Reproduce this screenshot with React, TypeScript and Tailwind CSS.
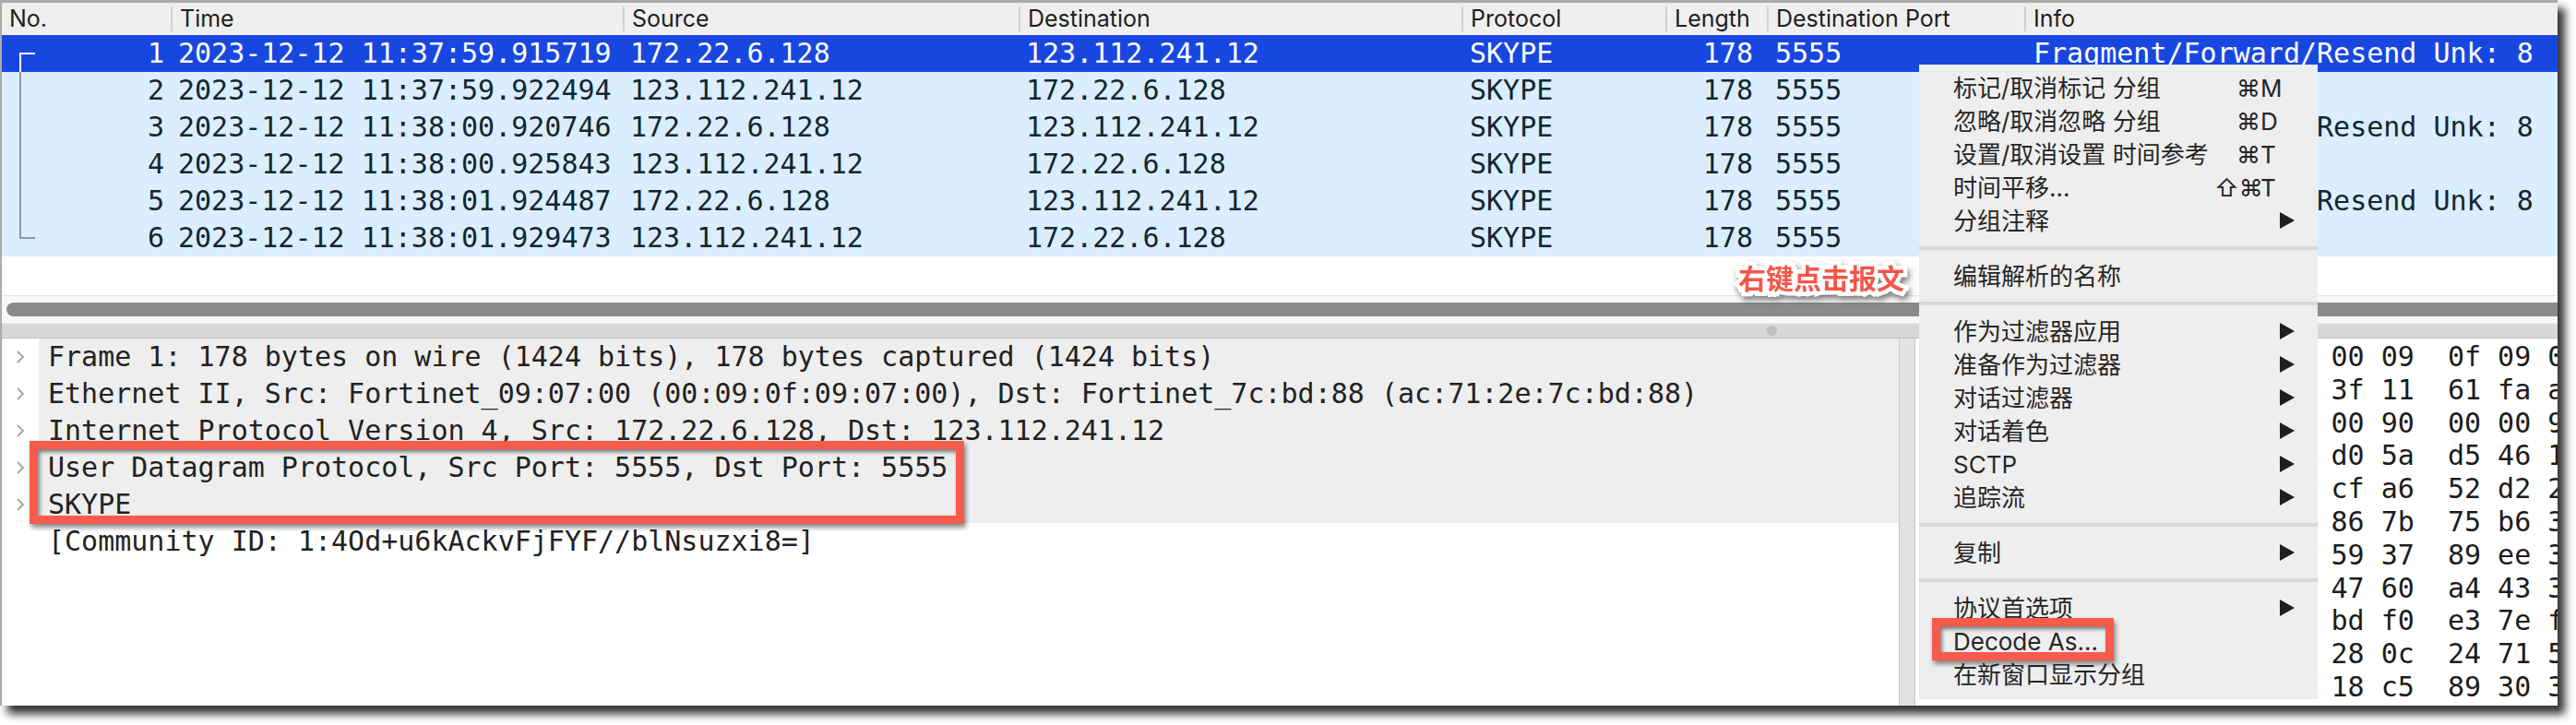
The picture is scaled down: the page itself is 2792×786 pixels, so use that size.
import React from 'react';

const MONO = "font-['DejaVu_Sans_Mono',monospace]";
const SANS = "font-['Inter','DejaVu_Sans','Noto_Sans_CJK_SC',sans-serif]";

type Row = string[];
const rows: Row[] = [
  ['1', '2023-12-12 11:37:59.915719', '172.22.6.128', '123.112.241.12', 'SKYPE', '178', '5555', 'Fragment/Forward/Resend Unk: 8'],
  ['2', '2023-12-12 11:37:59.922494', '123.112.241.12', '172.22.6.128', 'SKYPE', '178', '5555', 'Payload Unk: 8'],
  ['3', '2023-12-12 11:38:00.920746', '172.22.6.128', '123.112.241.12', 'SKYPE', '178', '5555', 'Fragment/Forward/Resend Unk: 8'],
  ['4', '2023-12-12 11:38:00.925843', '123.112.241.12', '172.22.6.128', 'SKYPE', '178', '5555', 'Payload Unk: 8'],
  ['5', '2023-12-12 11:38:01.924487', '172.22.6.128', '123.112.241.12', 'SKYPE', '178', '5555', 'Fragment/Forward/Resend Unk: 8'],
  ['6', '2023-12-12 11:38:01.929473', '123.112.241.12', '172.22.6.128', 'SKYPE', '178', '5555', 'Payload Unk: 8'],
];

const details = [
  { t: 'Frame 1: 178 bytes on wire (1424 bits), 178 bytes captured (1424 bits)', c: true },
  { t: 'Ethernet II, Src: Fortinet_09:07:00 (00:09:0f:09:07:00), Dst: Fortinet_7c:bd:88 (ac:71:2e:7c:bd:88)', c: true },
  { t: 'Internet Protocol Version 4, Src: 172.22.6.128, Dst: 123.112.241.12', c: true },
  { t: 'User Datagram Protocol, Src Port: 5555, Dst Port: 5555', c: true },
  { t: 'SKYPE', c: true },
  { t: '[Community ID: 1:4Od+u6kAckvFjFYF//blNsuzxi8=]', c: false },
];

const hex = [
  '0000  ac 71 2e 7c bd 88 00 09  0f 09 07 00 08 00 45 00',
  '0010  00 a4 5c 1e 00 00 3f 11  61 fa ac 16 06 80 7b 70',
  '0020  f1 0c 15 b3 15 b3 00 90  00 00 9c 3e 02 d8 4e 71',
  '0030  4b 96 e2 0f a3 71 d0 5a  d5 46 1c 8e 72 05 b9 33',
  '0040  e8 17 60 c2 9d 4a cf a6  52 d2 2f 0b 6e 91 c4 78',
  '0050  35 f2 a9 08 7d 1e 86 7b  75 b6 3a 54 e0 c7 12 9f',
  '0060  b1 6d 04 f8 2c 93 59 37  89 ee 3d 06 a8 57 f1 24',
  '0070  9a 40 cb 13 76 e5 47 60  a4 43 3e 81 5c 2a d9 07',
  '0080  62 0d f4 b8 1f 4c bd f0  e3 7e f5 9b 30 6a c2 11',
  '0090  d7 28 83 5e 04 b1 28 0c  24 71 58 e3 a6 19 7c 4f',
  '00a0  0e 95 36 ca 6f 22 18 c5  89 30 3b d4 62 f0 8d 45',
];

type MenuItem = { t: string; mod?: string; k?: string; sub?: boolean } | 'sep';
const menu: MenuItem[] = [
  { t: '标记/取消标记 分组', mod: '⌘', k: 'M' },
  { t: '忽略/取消忽略 分组', mod: '⌘', k: 'D' },
  { t: '设置/取消设置 时间参考', mod: '⌘', k: 'T' },
  { t: '时间平移…', mod: '⇧⌘', k: 'T' },
  { t: '分组注释', sub: true },
  'sep',
  { t: '编辑解析的名称' },
  'sep',
  { t: '作为过滤器应用', sub: true },
  { t: '准备作为过滤器', sub: true },
  { t: '对话过滤器', sub: true },
  { t: '对话着色', sub: true },
  { t: 'SCTP', sub: true },
  { t: '追踪流', sub: true },
  'sep',
  { t: '复制', sub: true },
  'sep',
  { t: '协议首选项', sub: true },
  { t: 'Decode As…' },
  { t: '在新窗口显示分组' },
];

function Bracket({ i }: { i: number }) {
  const white = i === 0;
  const d = i === 0 ? 'M36 20 H20 V40' : i === 5 ? 'M20 0 V20 H36' : 'M20 0 V40';
  return (
    <svg width="40" height="40" viewBox="0 0 40 40" className="shrink-0">
      <path d={d} fill="none" stroke={white ? '#ffffff' : '#8a9ba1'} strokeWidth="2" />
    </svg>
  );
}

function Sep() {
  return <div className="w-[2px] my-[4px] bg-[#d0d0d0] shrink-0" />;
}

export default function App() {
  return (
    <div className="relative w-[2792px] h-[786px] bg-white overflow-hidden">
      <div className="flex flex-col w-[2772px] h-[765px] border-t-[3px] border-l-2 border-[#ababab] bg-white shadow-[8px_9px_9px_rgba(0,0,0,0.8)]">
        {/* header */}
        <div className={`flex h-[35px] shrink-0 bg-[#efefef] text-[25px] text-[#1e1e1e] ${SANS}`}>
          <div className="w-[183px] flex items-center pl-[8px]">No.</div>
          <Sep />
          <div className="w-[488px] flex items-center pl-[8px]">Time</div>
          <Sep />
          <div className="w-[427px] flex items-center pl-[8px]">Source</div>
          <Sep />
          <div className="w-[478px] flex items-center pl-[8px]">Destination</div>
          <Sep />
          <div className="w-[219px] flex items-center pl-[8px]">Protocol</div>
          <Sep />
          <div className="w-[108px] flex items-center pl-[8px]">Length</div>
          <Sep />
          <div className="w-[277px] flex items-center pl-[8px] whitespace-nowrap">Destination Port</div>
          <Sep />
          <div className="flex-1 flex items-center pl-[8px]">Info</div>
        </div>

        {/* packet rows */}
        <div className={`flex flex-col shrink-0 text-[30px] leading-[40px] ${MONO}`}>
          {rows.map((r, i) => (
            <div
              key={i}
              className={`flex h-[40px] whitespace-pre ${i === 0 ? 'bg-[#1847e0] text-white' : 'bg-[#daeeff] text-[#12272e]'}`}
            >
              <div className="w-[183px] flex items-center">
                <Bracket i={i} />
                <span className="flex-1 text-right pr-[7px]">{r[0]}</span>
              </div>
              <div className="w-[490px] pl-[8px] overflow-hidden">{r[1]}</div>
              <div className="w-[429px] pl-[8px] overflow-hidden">{r[2]}</div>
              <div className="w-[480px] pl-[8px] overflow-hidden">{r[3]}</div>
              <div className="w-[221px] pl-[9px] overflow-hidden">{r[4]}</div>
              <div className="w-[110px] pr-[15px] text-right overflow-hidden">{r[5]}</div>
              <div className="w-[279px] pl-[9px] overflow-hidden">{r[6]}</div>
              <div className="flex-1 pl-[10px] overflow-hidden">{r[7]}</div>
            </div>
          ))}
        </div>

        {/* empty list area */}
        <div className="h-[42px] shrink-0 bg-white" />

        {/* horizontal scrollbar */}
        <div className="h-[30px] shrink-0 flex flex-col border-t border-[#e4e4e4] bg-[#f8f8f8]">
          <div className="mt-[7px] ml-[5px] h-[15px] rounded-l-full bg-[#8a8a8a]" />
        </div>

        {/* splitter */}
        <div className="h-[17px] shrink-0 flex items-center bg-[#d8d8d8] border-t border-[#ededed] border-b border-b-[#bdbdbd]">
          <div className="ml-[1913px] w-[11px] h-[11px] rounded-full bg-[#bfbfbf]" />
        </div>

        {/* bottom panes */}
        <div className="flex-1 flex min-h-0">
          {/* details */}
          <div className={`w-[2056px] shrink-0 bg-white flex flex-col text-[30px] leading-[40px] text-[#222222] whitespace-pre ${MONO}`}>
            {details.map((d, i) => (
              <div key={i} className="flex h-[40px]">
                <div className="w-[40px] shrink-0 flex items-center justify-center bg-white">
                  {d.c && (
                    <svg width="12" height="16" viewBox="0 0 12 16">
                      <path d="M3 2 L9 8 L3 14" fill="none" stroke="#a3a3a3" strokeWidth="1.8" />
                    </svg>
                  )}
                </div>
                <div className={`flex-1 pl-[10px] overflow-hidden ${d.c ? 'bg-[#eeeeee]' : 'bg-white'}`}>{d.t}</div>
              </div>
            ))}
          </div>

          {/* vertical splitter */}
          <div className="w-[18px] shrink-0 bg-[#e2e2e2] border-l border-r border-[#c8c8c8]" />

          {/* hex */}
          <div className={`flex-1 bg-white pl-[17px] pt-[2px] overflow-hidden whitespace-pre text-[30px] leading-[35.8px] text-[#1c1c1c] ${MONO}`}>
            {hex.map((h, i) => (
              <div key={i}>{h}</div>
            ))}
          </div>
        </div>
      </div>

      {/* context menu */}
      <div className={`absolute left-[2080px] top-[70px] w-[432px] h-[688px] bg-[#eeeeee] pt-[7px] text-[26px] text-[#262626] ${SANS}`}>
        {menu.map((m, i) =>
          m === 'sep' ? (
            <div key={i} className="my-[10px] h-[4px] bg-[#d8d8d8]" />
          ) : (
            <div key={i} className="h-[36px] flex items-center pl-[37px] pr-[25px] whitespace-nowrap">
              <span className="flex-1">{m.t}</span>
              <div className="w-[87px] flex items-center justify-end">
                {m.mod && (
                  <>
                    <span className="w-[50px] text-right">{m.mod}</span>
                    <span className="w-[37px]">{m.k}</span>
                  </>
                )}
                {m.sub && (
                  <svg width="16" height="18" viewBox="0 0 16 18">
                    <polygon points="0,0 16,9 0,18" fill="#1e1e1e" />
                  </svg>
                )}
              </div>
            </div>
          )
        )}
      </div>

      {/* annotation: right click label */}
      <div
        className={`absolute left-[1884px] top-[280px] text-[30px] leading-[40px] font-bold text-[#f4574a] [paint-order:stroke_fill] [-webkit-text-stroke:9px_#ffffff] drop-shadow-[2px_4px_3px_rgba(0,0,0,0.5)] font-['Noto_Sans_CJK_SC',sans-serif]`}
      >
        右键点击报文
      </div>

      {/* annotation boxes */}
      <div className="absolute left-[32px] top-[478px] w-[1013px] h-[90px] border-[9px] border-[#f85a4b] shadow-[2px_4px_5px_rgba(0,0,0,0.45),inset_2px_3px_4px_rgba(0,0,0,0.5)]" />
      <div className="absolute left-[2094px] top-[670px] w-[197px] h-[46px] border-[9px] border-[#f85a4b] shadow-[2px_4px_5px_rgba(0,0,0,0.45),inset_2px_3px_4px_rgba(0,0,0,0.5)]" />
    </div>
  );
}
